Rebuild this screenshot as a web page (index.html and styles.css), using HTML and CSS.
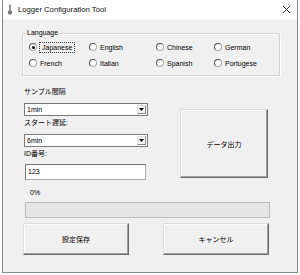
FILE: index.html
```html
<!DOCTYPE html>
<html lang="ja">
<head>
<meta charset="utf-8">
<link rel="stylesheet" href="styles.css">
</head>
<body>
<div class="window">
  <div class="titlebar">
    <svg class="app-icon" width="6" height="11" viewBox="0 0 6 11"><rect x="2" y="0.5" width="2" height="7" fill="#9a9a9a"/><circle cx="3" cy="8.5" r="2.2" fill="#7d7d7d"/></svg>
    <span class="title">Logger Configuration Tool</span>
    <svg class="close" width="9" height="9" viewBox="0 0 9 9"><path d="M1 1 L8 8 M8 1 L1 8" stroke="#222" stroke-width="0.9"/></svg>
  </div>
  <div class="content">
    <div class="group">
      <span class="legend">Language</span>
      <div class="radios">
        <div class="radio checked"><i class="dot"></i><span class="lbl focus">Japanese</span></div>
        <div class="radio"><i class="dot"></i><span class="lbl">English</span></div>
        <div class="radio"><i class="dot"></i><span class="lbl">Chinese</span></div>
        <div class="radio"><i class="dot"></i><span class="lbl">German</span></div>
        <div class="radio"><i class="dot"></i><span class="lbl">French</span></div>
        <div class="radio"><i class="dot"></i><span class="lbl">Italian</span></div>
        <div class="radio"><i class="dot"></i><span class="lbl">Spanish</span></div>
        <div class="radio"><i class="dot"></i><span class="lbl">Portugese</span></div>
      </div>
    </div>
    <div class="form">
      <div class="left">
        <div class="label l1">サンプル間隔</div>
        <div class="combo c1"><span class="val">1min</span><span class="arrow"><svg width="5" height="3" viewBox="0 0 5 3"><path d="M0 0 H5 L2.5 3 Z" fill="#000"/></svg></span></div>
        <div class="label l2">スタート遅延:</div>
        <div class="combo c2"><span class="val">6min</span><span class="arrow"><svg width="5" height="3" viewBox="0 0 5 3"><path d="M0 0 H5 L2.5 3 Z" fill="#000"/></svg></span></div>
        <div class="label l3">ID番号:</div>
        <div class="textbox">123</div>
      </div>
      <div class="right">
        <button class="btn export">データ出力</button>
      </div>
    </div>
    <div class="pct">0%</div>
    <div class="progress"></div>
    <div class="buttons">
      <button class="btn save">設定保存</button>
      <button class="btn cancel">キャンセル</button>
    </div>
  </div>
</div>
</body>
</html>
```
FILE: styles.css
```css
html, body {
  margin: 0;
  padding: 0;
  background: #ffffff;
}
body {
  width: 300px;
  height: 275px;
  overflow: hidden;
  font-family: "Liberation Sans", "Noto Sans CJK JP", sans-serif;
  font-size: 7px;
  color: #000;
}
.window {
  margin-left: 2px;
  width: 294px;
  height: 272px;
  border: 1px solid #8a8a8a;
  border-top: none;
  background: #f0f0f0;
  box-sizing: content-box;
}
.titlebar {
  height: 19px;
  background: #ffffff;
  display: flex;
  align-items: center;
  box-shadow: 0 1px 0 #f7f7f7;
}
.app-icon {
  margin-left: 4px;
  margin-top: -1px;
}
.title {
  margin-left: 5px;
  font-size: 7.7px;
  color: #111;
}
.close {
  margin-left: auto;
  margin-right: 6px;
}
.content {
  padding-left: 19px;
}
.group {
  position: relative;
  margin-top: 14px;
  width: 256px;
  height: 41px;
  border: 1px solid #d4d4d4;
  box-shadow: inset 1px 1px 0 #fdfdfd, 1px 1px 0 #fdfdfd;
}
.legend {
  position: absolute;
  left: 3px;
  top: -6px;
  padding: 0 1px;
  line-height: 10px;
  background: #f0f0f0;
}
.radios {
  display: grid;
  grid-template-columns: 60px 67px 58px auto;
  grid-auto-rows: 16px;
  padding: 5px 0 0 6px;
}
.radio {
  display: flex;
  align-items: center;
}
.dot {
  display: block;
  width: 8px;
  height: 8px;
  box-sizing: border-box;
  border-radius: 50%;
  background: #ffffff;
  border: 1px solid #a8a8a8;
  border-top-color: #555;
  border-left-color: #555;
  position: relative;
}
.checked .dot::after {
  content: "";
  position: absolute;
  left: 1.5px;
  top: 1.5px;
  width: 3px;
  height: 3px;
  border-radius: 50%;
  background: #000;
}
.lbl {
  margin-left: 1px;
  padding: 0 1px;
  line-height: 9px;
  border: 1px dotted transparent;
}
.lbl.focus {
  border-color: #333;
  margin-left: 2px;
  padding: 0 2px;
}
.form {
  display: grid;
  grid-template-columns: 124px 88px;
  column-gap: 32px;
  padding-left: 2px;
}
.label {
  line-height: 10px;
}
.l1 { margin-top: 11px; }
.l2 { margin-top: 2px; }
.l3 { margin-top: 2px; }
.combo {
  height: 13px;
  box-sizing: border-box;
  background: #fff;
  border: 1px solid #7a7a7a;
  display: flex;
  align-items: center;
}
.c1 { margin-top: 6px; }
.c2 { margin-top: 6px; }
.val {
  padding-left: 2px;
  flex: 1;
}
.arrow {
  width: 9px;
  height: 9px;
  margin-right: 1px;
  display: flex;
  align-items: center;
  justify-content: center;
  background: #f4f4f4;
  border: 1px solid #e0e0e0;
  border-right-color: #888;
  border-bottom-color: #888;
  box-sizing: border-box;
}
.textbox {
  margin-top: 5px;
  margin-left: 1px;
  width: 121px;
  height: 16px;
  box-sizing: border-box;
  background: #fff;
  border: 1px solid #aaaaaa;
  border-top-color: #777;
  border-left-color: #777;
  padding: 2px 0 0 2px;
  line-height: 9px;
}
.right {
  display: flex;
  align-items: flex-start;
}
.btn {
  font-family: "Liberation Sans", "Noto Sans CJK JP", sans-serif;
  font-size: 7px;
  color: #000;
  background: #f0f0f0;
  border: 1px solid;
  border-color: #dcdcdc #6a6a6a #6a6a6a #dcdcdc;
  box-shadow: inset -1px -1px 0 #a0a0a0, inset 1px 1px 0 #ffffff;
  padding: 0;
  margin: 0;
  box-sizing: border-box;
}
.export {
  margin-top: 33px;
  width: 88px;
  height: 69px;
}
.pct {
  margin: 8px 0 0 8px;
  line-height: 10px;
}
.progress {
  margin: 4px 0 0 3px;
  width: 245px;
  height: 16px;
  box-sizing: border-box;
  border: 1px solid #bcbcbc;
  background: #e6e6e6;
}
.buttons {
  display: flex;
  margin-top: 5px;
  padding-left: 1px;
}
.save {
  width: 106px;
  height: 32px;
}
.cancel {
  margin-left: 34px;
  width: 106px;
  height: 32px;
}
```
